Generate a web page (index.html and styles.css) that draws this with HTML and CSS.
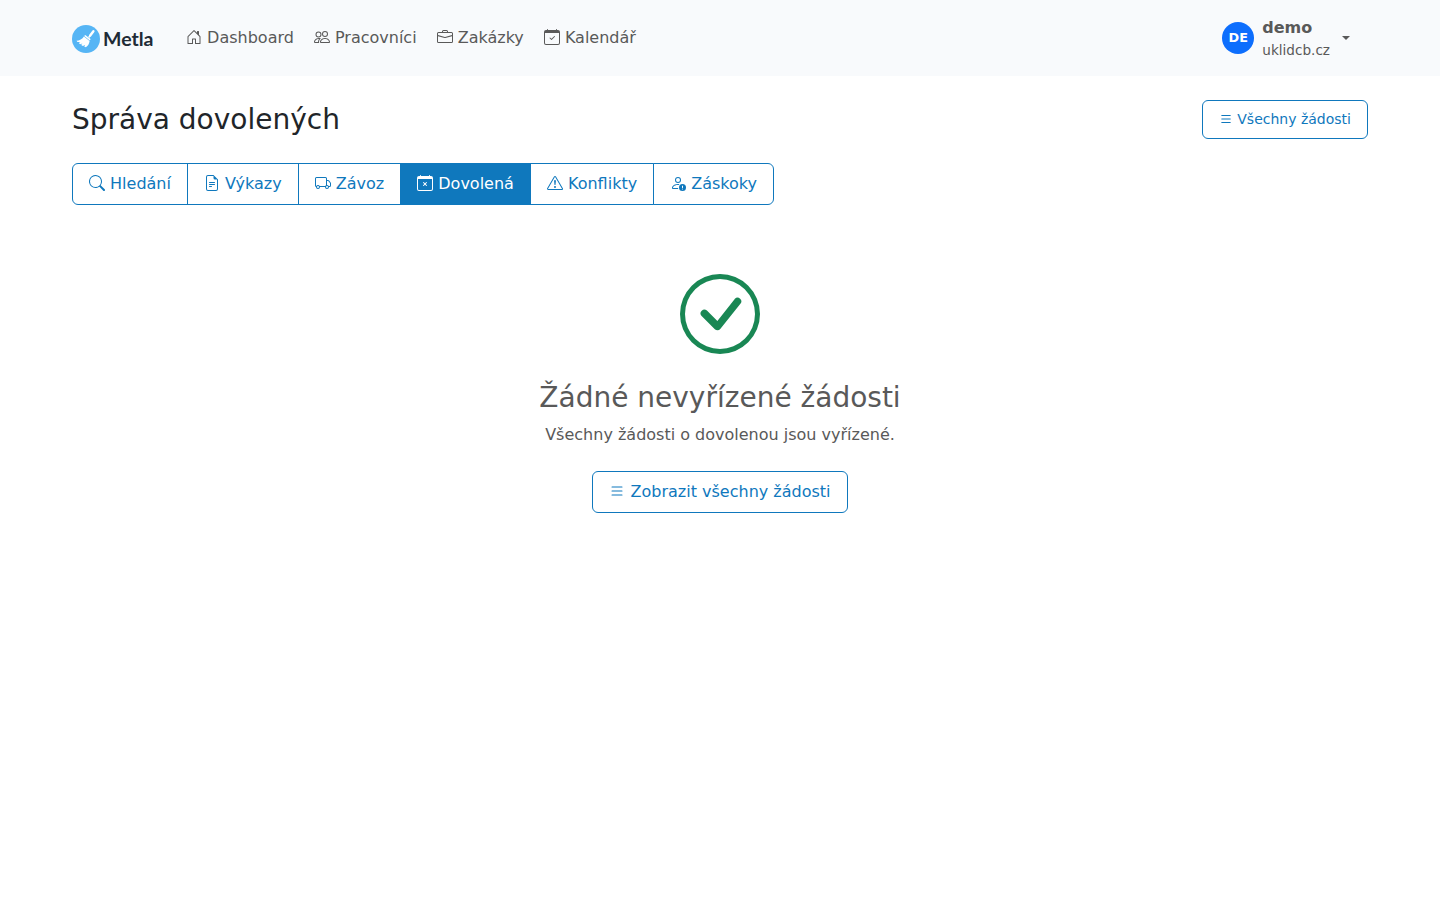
FILE: index.html
```
<!DOCTYPE html>
<html lang="cs">
<head>
    <meta charset="UTF-8">
    <meta name="viewport" content="width=device-width, initial-scale=1.0">
    <title>Správa dovolených</title>
    <link rel="stylesheet" href="styles.css">
</head>
<body>
    <nav class="navbar">
        <div class="container navbar-inner">
            <a class="brand" href="#">
                <svg class="brand-logo" viewBox="0 0 28 28">
                    <circle cx="14" cy="14" r="14" fill="#56b5f5"/>
                    <path d="M21.4 6.2l-3.2 4.3" stroke="#fff" stroke-width="2.4" stroke-linecap="round"/>
                    <path d="M18.2 10.5l-1.5 2" stroke="#fff" stroke-width="1.6"/>
                    <path d="M13.2 9.9l5.4 4.2-.8 1.3-5.6-4.3z" fill="#fff"/>
                    <path d="M11.9 11.5l5.7 4.4c-.4 2.7-1.6 4.9-3.7 6.3l-1.7-.8 1-1.6-2.2 1.3-1.9-1 1.4-1.7-2.4.8-1.3-1.3 1.5-1-2.8.1-1-1.300c2.800 0 6-1.700 7.400-4.200z" fill="#fff"/>
                </svg>
                <span class="brand-name">Metla</span>
            </a>
            <div class="nav-links">
                <a class="nav-link" href="#"><svg class="icon" viewBox="0 0 16 16"><path d="M8.354 1.146a.5.5 0 0 0-.708 0l-6 6A.5.5 0 0 0 1.500 7.500v7a.5.5 0 0 0 .5.5h4.500a.5.5 0 0 0 .5-.5v-4h2v4a.5.5 0 0 0 .5.5H14a.5.5 0 0 0 .5-.5v-7a.5.5 0 0 0-.146-.354L13 5.793V2.500a.5.5 0 0 0-.5-.5h-1a.5.5 0 0 0-.5.5v1.293zM2.500 14V7.707l5.500-5.500 5.500 5.500V14H10v-4a.5.5 0 0 0-.5-.5h-3a.5.5 0 0 0-.5.5v4z"/></svg> Dashboard</a>
                <a class="nav-link" href="#"><svg class="icon" viewBox="0 0 16 16"><path d="M15 14s1 0 1-1-1-4-5-4-5 3-5 4 1 1 1 1zm-7.978-1L7 12.996c.001-.264.167-1.030.760-1.720C8.312 10.629 9.282 10 11 10c1.717 0 2.687.63 3.240 1.276.593.690.758 1.457.760 1.720l-.008.002-.014.002zM11 7a2 2 0 1 0 0-4 2 2 0 0 0 0 4m3-2a3 3 0 1 1-6 0 3 3 0 0 1 6 0M6.936 9.280a6 6 0 0 0-1.230-.247A7 7 0 0 0 5 9c-4 0-5 3-5 4q0 1 1 1h4.216A2.240 2.240 0 0 1 5 13c0-1.010.377-2.042 1.090-2.904.243-.294.526-.569.846-.816M4.920 10A5.500 5.500 0 0 0 4 13H1c0-.260.164-1.030.760-1.724.545-.636 1.492-1.256 3.160-1.275ZM1.500 5.500a3 3 0 1 1 6 0 3 3 0 0 1-6 0m3-2a2 2 0 1 0 0 4 2 2 0 0 0 0-4"/></svg> Pracovníci</a>
                <a class="nav-link" href="#"><svg class="icon" viewBox="0 0 16 16"><path d="M6.500 1A1.500 1.500 0 0 0 5 2.500V3H1.500A1.500 1.500 0 0 0 0 4.500v8A1.500 1.500 0 0 0 1.500 14h13a1.500 1.500 0 0 0 1.500-1.500v-8A1.500 1.500 0 0 0 14.500 3H11v-.5A1.500 1.500 0 0 0 9.500 1zm0 1h3a.5.5 0 0 1 .5.5V3H6v-.5a.5.5 0 0 1 .5-.5m1.886 6.914L15 7.151V12.500a.5.5 0 0 1-.5.5h-13a.5.5 0 0 1-.5-.5V7.150l6.614 1.764a1.500 1.500 0 0 0 .772 0M1.500 4h13a.5.5 0 0 1 .5.5v1.616L8.129 7.948a.5.5 0 0 1-.258 0L1 6.116V4.500a.5.5 0 0 1 .5-.5"/></svg> Zakázky</a>
                <a class="nav-link" href="#"><svg class="icon" viewBox="0 0 16 16"><path d="M10.854 7.146a.5.5 0 0 1 0 .708l-3 3a.5.5 0 0 1-.708 0l-1.500-1.500a.5.5 0 1 1 .708-.708L7.500 9.793l2.646-2.647a.5.5 0 0 1 .708 0"/><path d="M3.500 0a.5.5 0 0 1 .5.5V1h8V.5a.5.5 0 0 1 1 0V1h1a2 2 0 0 1 2 2v11a2 2 0 0 1-2 2H2a2 2 0 0 1-2-2V3a2 2 0 0 1 2-2h1V.5a.5.5 0 0 1 .5-.5M1 4v10a1 1 0 0 0 1 1h12a1 1 0 0 0 1-1V4z"/></svg> Kalendář</a>
            </div>
            <a class="user" href="#">
                <span class="avatar">DE</span>
                <span class="user-info">
                    <strong>demo</strong>
                    <small>uklidcb.cz</small>
                </span>
                <span class="caret"></span>
            </a>
        </div>
    </nav>

    <main class="container main">
        <div class="page-header">
            <h1>Správa dovolených</h1>
            <a class="btn btn-sm" href="#"><svg class="icon" viewBox="0 0 16 16"><path d="M2.500 12a.5.5 0 0 1 .5-.5h10a.5.5 0 0 1 0 1H3a.5.5 0 0 1-.5-.5m0-4a.5.5 0 0 1 .5-.5h10a.5.5 0 0 1 0 1H3a.5.5 0 0 1-.5-.5m0-4a.5.5 0 0 1 .5-.5h10a.5.5 0 0 1 0 1H3a.5.5 0 0 1-.5-.5"/></svg> Všechny žádosti</a>
        </div>

        <div class="btn-group">
            <a class="btn" href="#"><svg class="icon" viewBox="0 0 16 16"><path d="M11.742 10.344a6.500 6.500 0 1 0-1.397 1.398h-.001q.044.060.098.115l3.850 3.850a1 1 0 0 0 1.415-1.414l-3.850-3.850a1 1 0 0 0-.115-.1zM12 6.500a5.500 5.500 0 1 1-11 0 5.500 5.500 0 0 1 11 0"/></svg> Hledání</a>
            <a class="btn" href="#"><svg class="icon" viewBox="0 0 16 16"><path d="M5.500 7a.5.5 0 0 0 0 1h5a.5.5 0 0 0 0-1zM5 9.500a.5.5 0 0 1 .5-.5h5a.5.5 0 0 1 0 1h-5a.5.5 0 0 1-.5-.5m0 2a.5.5 0 0 1 .5-.5h2a.5.5 0 0 1 0 1h-2a.5.5 0 0 1-.5-.5"/><path d="M9.500 0H4a2 2 0 0 0-2 2v12a2 2 0 0 0 2 2h8a2 2 0 0 0 2-2V4.500zm0 1v2A1.500 1.500 0 0 0 11 4.500h2V14a1 1 0 0 1-1 1H4a1 1 0 0 1-1-1V2a1 1 0 0 1 1-1z"/></svg> Výkazy</a>
            <a class="btn" href="#"><svg class="icon" viewBox="0 0 16 16"><path d="M0 3.500A1.500 1.500 0 0 1 1.500 2h9A1.500 1.500 0 0 1 12 3.500V5h1.020a1.500 1.500 0 0 1 1.170.563l1.481 1.850a1.500 1.500 0 0 1 .329.938V10.500a1.500 1.500 0 0 1-1.500 1.500H14a2 2 0 1 1-4 0H5a2 2 0 1 1-3.998-.085A1.500 1.500 0 0 1 0 10.500zm1.294 7.456A2 2 0 0 1 4.732 11h5.536a2 2 0 0 1 .732-.732V3.500a.5.5 0 0 0-.5-.5h-9a.5.5 0 0 0-.5.5v7a.5.5 0 0 0 .294.456M12 10a2 2 0 0 1 1.732 1h.768a.5.5 0 0 0 .5-.5V8.350a.5.5 0 0 0-.11-.312l-1.480-1.850A.5.5 0 0 0 13.020 6H12zm-9 1a1 1 0 1 0 0 2 1 1 0 0 0 0-2m9 0a1 1 0 1 0 0 2 1 1 0 0 0 0-2"/></svg> Závoz</a>
            <a class="btn active" href="#"><svg class="icon" viewBox="0 0 16 16"><path d="M6.146 7.146a.5.5 0 0 1 .708 0L8 8.293l1.146-1.147a.5.5 0 1 1 .708.708L8.707 9l1.147 1.146a.5.5 0 0 1-.708.708L8 9.707l-1.146 1.147a.5.5 0 0 1-.708-.708L7.293 9 6.146 7.854a.5.5 0 0 1 0-.708"/><path d="M3.500 0a.5.5 0 0 1 .5.5V1h8V.5a.5.5 0 0 1 1 0V1h1a2 2 0 0 1 2 2v11a2 2 0 0 1-2 2H2a2 2 0 0 1-2-2V3a2 2 0 0 1 2-2h1V.5a.5.5 0 0 1 .5-.5M1 4v10a1 1 0 0 0 1 1h12a1 1 0 0 0 1-1V4z"/></svg> Dovolená</a>
            <a class="btn" href="#"><svg class="icon" viewBox="0 0 16 16"><path d="M7.938 2.016A.13.13 0 0 1 8.002 2a.13.13 0 0 1 .063.016.15.15 0 0 1 .054.057l6.857 11.667c.036.060.035.124.002.183a.2.2 0 0 1-.054.060.1.1 0 0 1-.066.017H1.146a.1.1 0 0 1-.066-.017.2.2 0 0 1-.054-.060.18.18 0 0 1 .002-.183L7.884 2.073a.15.15 0 0 1 .054-.057m1.044-.45a1.130 1.130 0 0 0-1.960 0L.165 13.233c-.457.778.091 1.767.980 1.767h13.713c.889 0 1.438-.99.980-1.767z"/><path d="M7.002 12a1 1 0 1 1 2 0 1 1 0 0 1-2 0M7.100 5.995a.905.905 0 1 1 1.800 0l-.35 3.507a.552.552 0 0 1-1.100 0z"/></svg> Konflikty</a>
            <a class="btn" href="#"><svg class="icon" viewBox="0 0 16 16"><path d="M11 5a3 3 0 1 1-6 0 3 3 0 0 1 6 0M8 7a2 2 0 1 0 0-4 2 2 0 0 0 0 4m.256 7a4.500 4.500 0 0 1-.229-1.004H3c.001-.246.154-.986.832-1.664C4.484 10.680 5.711 10 8 10q.39 0 .74.025c.226-.341.496-.65.804-.918Q8.844 9.002 8 9c-5 0-6 3-6 4s1 1 1 1z"/><path d="M16 12.500a3.500 3.500 0 1 1-7 0 3.500 3.500 0 0 1 7 0m-3.500-2a.5.5 0 0 0-.5.5v1.500a.5.5 0 0 0 1 0V11a.5.5 0 0 0-.5-.5m0 4a.5.5 0 1 0 0-1 .5.5 0 0 0 0 1"/></svg> Záskoky</a>
        </div>

        <section class="empty-state">
            <svg class="empty-icon" viewBox="0 0 16 16"><path d="M8 15A7 7 0 1 1 8 1a7 7 0 0 1 0 14m0 1A8 8 0 1 0 8 0a8 8 0 0 0 0 16"/><path d="m10.970 4.970-.02.022-3.473 4.425-2.093-2.094a.75.75 0 0 0-1.060 1.060L6.970 11.030a.75.75 0 0 0 1.079-.02l3.992-4.990a.75.75 0 0 0-1.071-1.050"/></svg>
            <h2>Žádné nevyřízené žádosti</h2>
            <p>Všechny žádosti o dovolenou jsou vyřízené.</p>
            <a class="btn" href="#"><svg class="icon" viewBox="0 0 16 16"><path d="M2.500 12a.5.5 0 0 1 .5-.5h10a.5.5 0 0 1 0 1H3a.5.5 0 0 1-.5-.5m0-4a.5.5 0 0 1 .5-.5h10a.5.5 0 0 1 0 1H3a.5.5 0 0 1-.5-.5m0-4a.5.5 0 0 1 .5-.5h10a.5.5 0 0 1 0 1H3a.5.5 0 0 1-.5-.5"/></svg> Zobrazit všechny žádosti</a>
        </section>
    </main>
</body>
</html>
```
FILE: styles.css
```
* {
    box-sizing: border-box;
}
body {
    margin: 0;
    font-family: "DejaVu Sans", sans-serif;
    font-size: 16px;
    line-height: 1.5;
    color: #212529;
    background-color: #fff;
}
a {
    text-decoration: none;
}
.container {
    max-width: 1320px;
    margin: 0 auto;
    padding: 0 12px;
}
.icon {
    width: 1em;
    height: 1em;
    fill: currentColor;
    vertical-align: -0.125em;
}

/* Horní navigace */
.navbar {
    background-color: #f8fafc;
}
.navbar-inner {
    display: flex;
    align-items: center;
    height: 76px;
}
.brand {
    display: flex;
    align-items: center;
    gap: 3px;
    width: 104px;
    padding-top: 2px;
    color: #212b36;
}
.brand-logo {
    width: 28px;
    height: 28px;
    fill: none;
}
.brand-name {
    font-family: Lato, sans-serif;
    font-size: 19.5px;
    font-weight: 700;
    line-height: 28px;
}
.nav-links {
    display: flex;
}
.nav-link {
    padding: 8px 10px;
    color: #595959;
}
.user {
    display: flex;
    align-items: center;
    margin-left: auto;
    padding-right: 18px;
    color: #595959;
}
.avatar {
    display: flex;
    align-items: center;
    justify-content: center;
    width: 32px;
    height: 32px;
    margin-right: 8px;
    border-radius: 50%;
    background-color: #0d6efd;
    color: #fff;
    font-size: 12.8px;
    font-weight: bold;
}
.user-info {
    display: flex;
    flex-direction: column;
}
.user-info small {
    font-size: 13.6px;
}
.caret {
    margin-left: 12px;
    border-top: 4px solid;
    border-right: 4px solid transparent;
    border-left: 4px solid transparent;
}

/* Obsah stránky */
.main {
    padding-top: 24px;
}
.page-header {
    display: flex;
    justify-content: space-between;
    align-items: center;
    margin-bottom: 24px;
}
h1,
h2 {
    margin: 0;
    font-size: 28px;
    font-weight: 500;
    line-height: 1.2;
}
.btn {
    display: inline-block;
    padding: 8px 16px;
    border: 1px solid #0f78bd;
    border-radius: 6px;
    background-color: #fff;
    color: #0f78bd;
}
.btn-sm {
    font-size: 14px;
}
.btn.active {
    background-color: #0f78bd;
    color: #fff;
}
.btn-group {
    display: inline-flex;
    vertical-align: top;
}
.btn-group .btn {
    border-radius: 0;
}
.btn-group .btn + .btn {
    margin-left: -1px;
}
.btn-group .btn:first-child {
    border-radius: 6px 0 0 6px;
}
.btn-group .btn:last-child {
    border-radius: 0 6px 6px 0;
}

/* Prázdný stav */
.empty-state {
    display: flex;
    flex-direction: column;
    align-items: center;
    padding-top: 69px;
    color: #595959;
}
.empty-icon {
    width: 80px;
    height: 80px;
    margin-bottom: 27px;
    fill: #198754;
}
.empty-state h2 {
    margin-bottom: 8px;
}
.empty-state p {
    margin: 0 0 24px;
}
```
